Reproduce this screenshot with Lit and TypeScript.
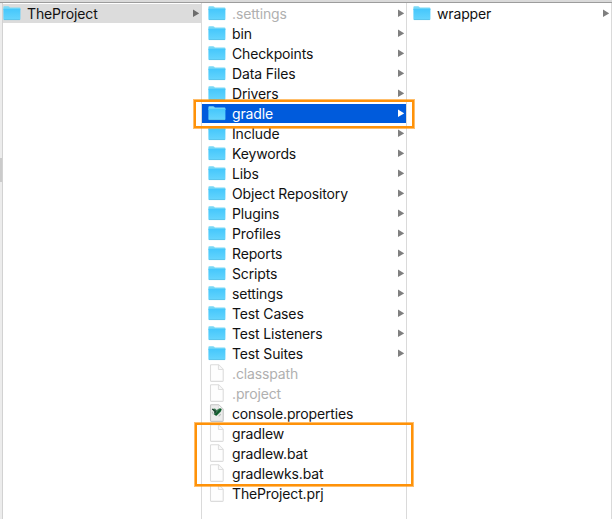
import { LitElement, html, css, svg, nothing } from "lit";
import { customElement, property } from "lit/decorators.js";

type Kind = "folder" | "file" | "props";
interface Entry {
  name: string;
  kind: Kind;
  dim?: boolean;
  state?: "active" | "path";
}

const folders = (names: string[]): Entry[] => names.map((name) => ({ name, kind: "folder" }));

const columns: Entry[][] = [
  [{ name: "TheProject", kind: "folder", state: "path" }],
  [
    { name: ".settings", kind: "folder", dim: true },
    ...folders(["bin", "Checkpoints", "Data Files", "Drivers"]),
    { name: "gradle", kind: "folder", state: "active" },
    ...folders(["Include", "Keywords", "Libs", "Object Repository", "Plugins", "Profiles",
      "Reports", "Scripts", "settings", "Test Cases", "Test Listeners", "Test Suites"]),
    { name: ".classpath", kind: "file", dim: true },
    { name: ".project", kind: "file", dim: true },
    { name: "console.properties", kind: "props" },
    { name: "gradlew", kind: "file" },
    { name: "gradlew.bat", kind: "file" },
    { name: "gradlewks.bat", kind: "file" },
    { name: "TheProject.prj", kind: "file" },
  ],
  [{ name: "wrapper", kind: "folder" }],
];

@customElement("finder-icon")
class FinderIcon extends LitElement {
  @property() kind: Kind = "folder";

  static styles = css`
    :host { display: block; width: 18px; height: 19px; }
    svg { display: block; }
  `;

  render() {
    const art =
      this.kind === "folder"
        ? svg`
          <defs><linearGradient id="f" x1="0" y1="0" x2="0" y2="1">
            <stop offset="0" stop-color="#45c7fc"/><stop offset="1" stop-color="#66d5fd"/>
          </linearGradient></defs>
          <path d="M.4 5V3.2Q.4 2.3 1.3 2.3H5.2Q5.8 2.3 6.2 2.8L6.9 3.6H16.5Q17.4 3.6 17.4 4.5V6H.4Z" fill="#7ad9f6"/>
          <path d="M.4 4.8H17.4V15Q17.4 15.9 16.5 15.9H1.3Q.4 15.9 .4 15Z" fill="url(#f)"/>
          <path d="M.9 15.6H16.9" stroke="#55b9de" stroke-width=".6"/>`
        : svg`
          <path d="M3.3 .7H10.4L15.2 5.5V16.6Q15.2 17.4 14.4 17.4H3.3Q2.5 17.4 2.5 16.6V1.5Q2.5 .7 3.3 .7Z"
            fill=${this.kind === "props" ? "#ececec" : "#fefefe"}
            stroke=${this.kind === "props" ? "#c4c4c4" : "#dcdcdc"} stroke-width="1.1" stroke-linejoin="round"/>
          <path d="M10.4 .9V5.5H15.1" fill="#f8f8f8" stroke="#dedede" stroke-width="1"/>
          ${this.kind === "props"
            ? svg`<path d="M4.2 5L7 4.4 8.6 6 11.6 4.2 13.6 4.8 13 7.6 11 9.4 8.6 11.8 6 10.8 6.4 8.6Z" fill="#3f8057"/>
                <path d="M4.2 4.9L7.6 7.4L6.6 9.4" fill="none" stroke="#234234" stroke-width="1.3"/>
                <path d="M7.4 11.2L13 5.2" stroke="#0f5a2c" stroke-width="1.8"/>
                <path d="M4.2 7.8L5.4 10.4M10.6 12.4L12.8 10.2" stroke="#b4bdb8" stroke-width="1.1"/>`
            : nothing}`;
    return html`<svg width="18" height="19" viewBox="0 0 18 19">${art}</svg>`;
  }
}

@customElement("app-root")
class AppRoot extends LitElement {
  static styles = css`
    :host {
      display: block; position: relative; box-sizing: border-box;
      width: 612px; height: 519px; overflow: hidden; background: #fff;
      font: 14px/20px Inter, "Liberation Sans", sans-serif; letter-spacing: -.14px; color: #111;
    }
    .browser { display: flex; flex-direction: column; height: 100%; }
    .top { flex: none; height: 2px; background: #dadada; border-bottom: 1px solid #9c9c9c; }
    .body { flex: 1; display: grid; grid-template-columns: 2px 200px 205px 205px; min-height: 0; }
    .edge { background: #ececec; padding-top: 155px; }
    .mark { height: 24px; background: #cbcbcb; }
    .column { border-right: 1px solid #dadada; padding-top: 1px; }
    .column.first { border-left: 1px solid #d2d2d2; }
    .row { display: flex; align-items: center; height: 19px; margin-bottom: 1px; padding: 0 2px 0 6px; white-space: nowrap; }
    .first .row { padding-left: 0; }
    .row.path { background: #dcdcdc; }
    .row.active { background: #005bdc; color: #fff; }
    .row.dim { color: #b0b0b0; }
    .name { flex: 1; padding-left: 6px; }
    .arrow { display: block; fill: #7f7f7f; }
    .path .arrow { fill: #6c6c6c; }
    .active .arrow { fill: #fff; }
    .callout { position: absolute; box-sizing: border-box; border: 2px solid #ff9209; box-shadow: 0 0 0 1px #ff920999; }
    .callout.one { left: 194px; top: 100px; width: 220px; height: 28px; }
    .callout.two { left: 195px; top: 423px; width: 218px; height: 63px; }
  `;

  private row(e: Entry) {
    return html`<div class="row ${e.state ?? ""} ${e.dim ? "dim" : ""}">
      <finder-icon .kind=${e.kind}></finder-icon>
      <span class="name">${e.name}</span>
      ${e.kind === "folder"
        ? html`<svg class="arrow" width="6" height="9" viewBox="0 0 6 9"><path d="M0 .6L6.2 4.3 0 8Z" /></svg>`
        : nothing}
    </div>`;
  }

  render() {
    return html`<div class="browser">
        <div class="top"></div>
        <div class="body">
          <div class="edge"><div class="mark"></div></div>
          ${columns.map((c, i) => html`<div class="column ${i === 0 ? "first" : ""}">${c.map((e) => this.row(e))}</div>`)}
        </div>
      </div>
      <div class="callout one"></div>
      <div class="callout two"></div>`;
  }
}
